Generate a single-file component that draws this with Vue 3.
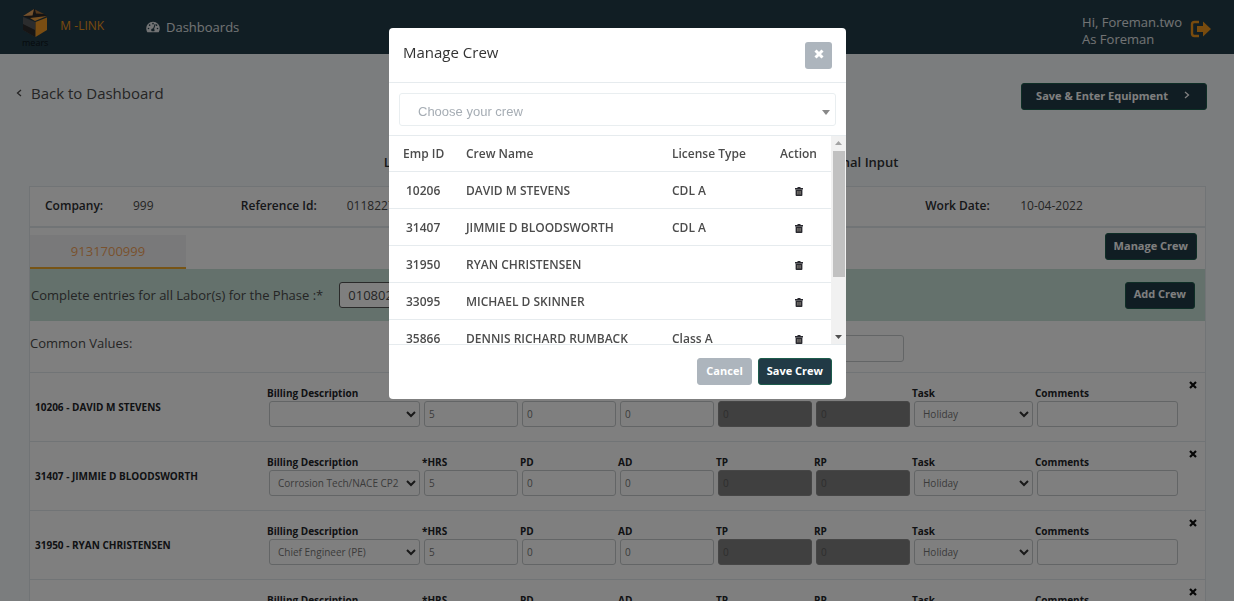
<script setup>
const entries = [
  { id: '10206', name: 'DAVID M STEVENS', billing: '' },
  { id: '31407', name: 'JIMMIE D BLOODSWORTH', billing: 'Corrosion Tech/NACE CP2' },
  { id: '31950', name: 'RYAN CHRISTENSEN', billing: 'Chief Engineer (PE)' },
  { id: '33095', name: 'MICHAEL D SKINNER', billing: '' },
]
const numbers = [
  { key: 'hrs', label: '*HRS', value: 5, off: false },
  { key: 'pd', label: 'PD', value: 0, off: false },
  { key: 'ad', label: 'AD', value: 0, off: false },
  { key: 'tp', label: 'TP', value: 0, off: true },
  { key: 'rp', label: 'RP', value: 0, off: true },
]
const crew = [
  { id: '10206', name: 'DAVID M STEVENS', license: 'CDL A' },
  { id: '31407', name: 'JIMMIE D BLOODSWORTH', license: 'CDL A' },
  { id: '31950', name: 'RYAN CHRISTENSEN', license: '' },
  { id: '33095', name: 'MICHAEL D SKINNER', license: '' },
  { id: '35866', name: 'DENNIS RICHARD RUMBACK', license: 'Class A' },
]
</script>

<template>
  <div class="app">
    <header class="topbar">
      <a href="#" class="brand">
        <span class="logo">
          <svg viewBox="0 0 26 30" width="26" height="30" aria-hidden="true">
            <path d="M1 9 13 14V29L1 22Z" fill="#57585a" />
            <path d="M1 16 13 22V29L1 22Z" fill="#2c2a2a" />
            <path d="M13.500 14 25 9.500V22L13.500 29Z" fill="#f59a24" />
            <path d="M1 8 12 1 25 8 13 13Z" fill="#2a2626" />
            <path d="M1 8 12 1 10.500 7.500Z" fill="#e8a45c" />
            <path d="M8 10 25 8 13 13Z" fill="#f0a040" />
            <path d="M13 1.500 22 6 14 5.500Z" fill="#a8703a" />
          </svg>
          <span class="logo-name">mears</span>
        </span>
        <span class="brand-name">M -LINK</span>
      </a>
      <a href="#" class="nav">
        <svg viewBox="0 0 576 512" width="14" height="12" aria-hidden="true">
          <path fill="currentColor" d="M288 32C129 32 0 161 0 320c0 53 14 102 39 145 6 9 16 15 27 15h444c11 0 21-6 27-15 25-43 39-92 39-145C576 161 447 32 288 32Z" />
          <g fill="#223c48">
            <circle cx="288" cy="112" r="34" /><circle cx="144" cy="176" r="34" />
            <circle cx="96" cy="320" r="34" /><circle cx="480" cy="320" r="34" /><circle cx="440" cy="176" r="34" />
            <path d="M362 130 400 142 334 342 a64 64 0 0 1 8 90H234a64 64 0 0 1 58-112Z" />
          </g>
        </svg>
        Dashboards
      </a>
      <div class="user">
        <div>Hi, Foreman.two<br />As Foreman</div>
        <button type="button" class="logout" aria-label="Log out">
          <svg viewBox="0 0 22 18" width="22" height="18" aria-hidden="true">
            <path d="M9 2H4.500Q2 2 2 4.500V13.500Q2 16 4.500 16H9" fill="none" stroke="currentColor" stroke-width="2.400" />
            <path d="M7 6H13V1.500L21 9 13 16.500V12H7Z" fill="currentColor" />
          </svg>
        </button>
      </div>
    </header>

    <main>
      <div class="actions">
        <a href="#" class="back">
          <svg viewBox="0 0 6 8" width="6" height="8" aria-hidden="true"><path d="M5 1 1.500 4 5 7" /></svg>
          Back to Dashboard
        </a>
        <button type="button" class="btn next">
          Save &amp; Enter Equipment
          <svg viewBox="0 0 6 8" width="6" height="8" aria-hidden="true"><path d="M1 1 4.500 4 1 7" /></svg>
        </button>
      </div>
      <h1 class="title"><span>Labor</span><span>Additional Input</span></h1>

      <section class="card">
        <dl class="info">
          <dt>Company:</dt><dd>999</dd>
          <dt>Reference Id:</dt><dd>01182270</dd>
          <dt>Work Date:</dt><dd>10-04-2022</dd>
        </dl>
        <div class="tabs">
          <button type="button" class="tab">9131700999</button>
          <button type="button" class="btn">Manage Crew</button>
        </div>
        <div class="phase">
          <label for="phase">Complete entries for all Labor(s) for the Phase :*</label>
          <input id="phase" value="0108020" />
          <button type="button" class="btn">Add Crew</button>
        </div>
        <div class="common">
          <label for="common">Common Values:</label>
          <input id="common" />
        </div>
        <div v-for="e in entries" :key="e.id" class="entry">
          <div class="who">{{ e.id }} - {{ e.name }}</div>
          <div class="field">
            <label :for="'bill' + e.id">Billing Description</label>
            <div class="pick">
              <select :id="'bill' + e.id"><option>{{ e.billing }}</option></select>
              <svg viewBox="0 0 10 7" width="10" height="7" aria-hidden="true"><path d="M1 1 5 5 9 1" /></svg>
            </div>
          </div>
          <div v-for="n in numbers" :key="n.key" class="field">
            <label :for="n.key + e.id">{{ n.label }}</label>
            <input :id="n.key + e.id" :value="n.value" :disabled="n.off" />
          </div>
          <div class="field">
            <label :for="'task' + e.id">Task</label>
            <div class="pick">
              <select :id="'task' + e.id"><option>Holiday</option></select>
              <svg viewBox="0 0 10 7" width="10" height="7" aria-hidden="true"><path d="M1 1 5 5 9 1" /></svg>
            </div>
          </div>
          <div class="field">
            <label :for="'note' + e.id">Comments</label>
            <input :id="'note' + e.id" />
          </div>
          <button type="button" class="remove" aria-label="Remove entry">
            <svg viewBox="0 0 8 8" width="8" height="8" aria-hidden="true"><path d="M1 1 7 7M7 1 1 7" /></svg>
          </button>
        </div>
      </section>
    </main>

    <div class="overlay">
      <div class="modal" role="dialog" aria-labelledby="modal-title">
        <div class="modal-head">
          <h2 id="modal-title">Manage Crew</h2>
          <button type="button" class="close" aria-label="Close">
            <svg viewBox="0 0 10 10" width="10" height="10" aria-hidden="true"><path d="M1.500 1.500 8.500 8.500M8.500 1.500 1.500 8.500" /></svg>
          </button>
        </div>
        <div class="chooser">
          <select aria-label="Choose your crew"><option>Choose your crew</option></select>
          <svg viewBox="0 0 8 5" width="8" height="5" aria-hidden="true"><path d="M0 0H8L4 5Z" /></svg>
        </div>
        <div class="list">
          <div class="rows">
            <table>
              <thead>
                <tr><th class="id">Emp ID</th><th>Crew Name</th><th class="license">License Type</th><th class="act">Action</th></tr>
              </thead>
              <tbody>
                <tr v-for="c in crew" :key="c.id">
                  <td class="id">{{ c.id }}</td>
                  <td>{{ c.name }}</td>
                  <td>{{ c.license }}</td>
                  <td class="act">
                    <button type="button" :aria-label="'Delete ' + c.name">
                      <svg viewBox="0 0 8 9" width="8" height="9" aria-hidden="true">
                        <path d="M0 1H2.500V0H5.500V1H8V2.500H0Z" fill="#2a2a30" />
                        <path d="M.6 2.500H7.400V8.200Q7.400 9 6.600 9H1.400Q.6 9 .6 8.200Z" fill="#2a2a30" />
                        <path d="M2.700 4V7.500M4 4V7.500M5.300 4V7.500" stroke="#9a9488" stroke-width=".7" />
                      </svg>
                    </button>
                  </td>
                </tr>
              </tbody>
            </table>
          </div>
          <div class="scroll" aria-hidden="true">
            <svg viewBox="0 0 7 4" width="7" height="4"><path d="M0 4H7L3.500 0Z" fill="#a3a3a3" /></svg>
            <div class="thumb"></div>
            <svg viewBox="0 0 7 4" width="7" height="4"><path d="M0 0H7L3.500 4Z" fill="#505050" /></svg>
          </div>
        </div>
        <div class="modal-foot">
          <button type="button" class="btn muted">Cancel</button>
          <button type="button" class="btn">Save Crew</button>
        </div>
      </div>
    </div>
  </div>
</template>

<style>
body { background: #f7fafd; }
</style>

<style scoped>
.app, .app * { box-sizing: border-box; }
.app {
  height: 100vh;
  overflow: hidden;
  font-family: "Open Sans", "Noto Sans", sans-serif;
  font-size: 12px;
  color: #4a4a4a;
}
button, input, select { font: inherit; margin: 0; }
button { border: 0; padding: 0; background: none; color: inherit; }
a { color: inherit; text-decoration: none; }
svg { display: block; flex: none; }

.topbar {
  display: flex;
  align-items: center;
  height: 54px;
  padding: 0 22px;
  background: #223c48;
  color: #e4e7e9;
}
.brand { display: flex; align-items: center; gap: 12px; width: 124px; }
.logo { display: flex; flex-direction: column; align-items: center; }
.logo-name { font-size: 9px; line-height: 9px; color: #0c1418; }
.brand-name { color: #f0971c; font-size: 12px; padding-bottom: 4px; }
.nav { display: flex; align-items: center; gap: 6px; font-size: 13px; }
.user { margin-left: auto; display: flex; align-items: center; gap: 8px; font-size: 13px; line-height: 17px; padding-top: 8px; }
.logout { color: #f0971c; padding-bottom: 4px; }

.actions { display: flex; align-items: flex-start; justify-content: space-between; padding: 29px 27px 0 16px; }
.back { display: flex; align-items: center; gap: 9px; font-size: 15px; line-height: 20px; }
.back svg path, .next svg path { fill: none; stroke: currentColor; stroke-width: 1.3; }
.btn {
  height: 27px;
  padding: 0 8px 3px;
  border: 1px solid #1d5c4c;
  border-radius: 3px;
  background: #213a46;
  color: #fff;
  font-size: 11px;
  font-weight: 700;
  white-space: nowrap;
}
.next { display: flex; align-items: center; gap: 16px; padding: 0 16px 3px 14px; }
.title {
  display: flex;
  justify-content: space-between;
  padding: 0 27.200% 0 31.100%;
  margin: 42px 0 0;
  font-size: 13px;
  line-height: 20px;
  font-weight: 600;
  color: #303234;
}

.card { margin: 14px 28px 0 29px; border: 1px solid #e2e9ed; background: #fff; }
.info {
  display: grid;
  grid-template-columns: 88fr 108fr 106fr 579fr 95fr 185fr;
  margin: 0;
  padding: 0 0 2px 15px;
  line-height: 37px;
  border-bottom: 2px solid #e2e9ed;
  font-size: 12px;
}
.info dt { font-weight: 600; color: #2c2e32; white-space: nowrap; }
.info dd { margin: 0; }
.tabs { display: flex; align-items: flex-end; justify-content: space-between; height: 41px; padding-right: 8px; }
.tabs .btn { align-self: flex-start; margin-top: 5px; }
.tab { width: 156px; height: 34px; background: #f2f3f4; color: #f4a45c; font-size: 13px; border-bottom: 2px solid #efa82c; }
.phase { display: flex; align-items: center; height: 52px; padding: 0 10px 0 1px; background: #c8e2d9; font-size: 13px; font-weight: 500; }
.phase input { width: 180px; height: 26px; margin-left: 16px; border: 1px solid #555; border-radius: 3px; padding: 0 8px; background: #fff; color: inherit; font-weight: 400; }
.phase .btn { margin-left: auto; }
.common { display: flex; justify-content: space-between; align-items: center; height: 51px; padding: 0 301px 0 0; font-size: 13px; font-weight: 500; }
.common label { padding-bottom: 7px; }
.common input { width: 184px; height: 27px; margin-top: 4px; }
.common input, .field input, .pick select { border: 1px solid #c6cacc; border-radius: 3px; background: #fff; }
.entry {
  display: grid;
  grid-template-columns: 237fr 155fr repeat(5, 98fr) 123fr 145fr 25fr;
  height: 69px;
  border-top: 1px solid #e2e9ed;
  font-size: 10px;
}
.who { align-self: center; padding-left: 5px; font-weight: 700; color: #222428; }
.field { min-width: 0; padding: 13px 2px 0 0; }
.field label { display: block; line-height: 15px; font-weight: 700; color: #222428; white-space: nowrap; }
.field input, .pick { display: block; width: calc(100% - 2px); height: 26px; margin-left: 2px; }
.field input { padding: 0 4px; color: #777; }
.field input:disabled { background: #808080; color: #5c5c5c; border-color: #8c8c8c; }
.pick { position: relative; }
.pick select { appearance: none; width: 100%; height: 100%; padding: 0 8px; color: #777; }
.pick svg { position: absolute; right: 4px; top: 10px; }
.pick svg path { fill: none; stroke: #333; stroke-width: 2; }
.remove { align-self: start; justify-self: center; margin-top: 8px; }
.remove svg path { fill: none; stroke: #111; stroke-width: 2.2; }

.overlay {
  position: fixed;
  inset: 0;
  display: flex;
  justify-content: center;
  align-items: flex-start;
  padding: 28px 0 0 1px;
  background: rgba(0, 0, 0, 0.5);
}
.modal { width: 457px; max-width: 100%; background: #fff; border-radius: 4px; overflow: hidden; }
.modal-head { display: flex; justify-content: space-between; align-items: flex-start; height: 55px; padding: 14px 14px 0; border-bottom: 1px solid #e6ebee; }
.modal-head h2 { margin: 0; font-size: 15px; line-height: 20px; font-weight: 400; color: #333; }
.close { display: grid; place-items: center; width: 27px; height: 27px; border-radius: 3px; background: #adb5bd; padding-bottom: 3px; }
.close path { fill: none; stroke: #fff; stroke-width: 3; }
.chooser { position: relative; padding: 10px 10px 9px; }
.chooser select {
  appearance: none;
  display: block;
  width: 100%;
  height: 33px;
  padding: 4px 18px 0;
  border: 1px solid #e9eef0;
  border-radius: 3px;
  background: #fff;
  color: #a6adb4;
  font-family: "Liberation Sans", Arial, sans-serif;
  font-size: 13px;
}
.chooser svg { position: absolute; right: 16px; top: 27px; fill: #888; }
.list { display: flex; height: 210px; border-top: 1px solid #e6ebee; border-bottom: 1px solid #e6ebee; }
.rows { flex: 1; overflow: hidden; }
table { width: 100%; border-collapse: separate; border-spacing: 0; table-layout: fixed; }
th, td { height: 37px; padding: 0; border-bottom: 1px solid #e6ebee; text-align: left; font-size: 12px; font-weight: 600; color: #4c4c4c; white-space: nowrap; }
th { height: 36px; }
.id { width: 77px; padding-left: 14px; }
td.id { padding-left: 17px; }
.license { width: 94px; }
.act { width: 65px; text-align: center; }
td.act button { display: inline-block; vertical-align: middle; }
.scroll { display: flex; flex-direction: column; align-items: center; width: 15px; padding: 5px 0; background: #f1f1f1; }
.thumb { width: 12px; height: 126px; margin: 6px 0 auto; background: #c1c1c1; }
.modal-foot { display: flex; justify-content: flex-end; gap: 6px; padding: 13px 14px 14px; }
.muted { background: #adb5bd; border-color: #adb5bd; }
</style>
